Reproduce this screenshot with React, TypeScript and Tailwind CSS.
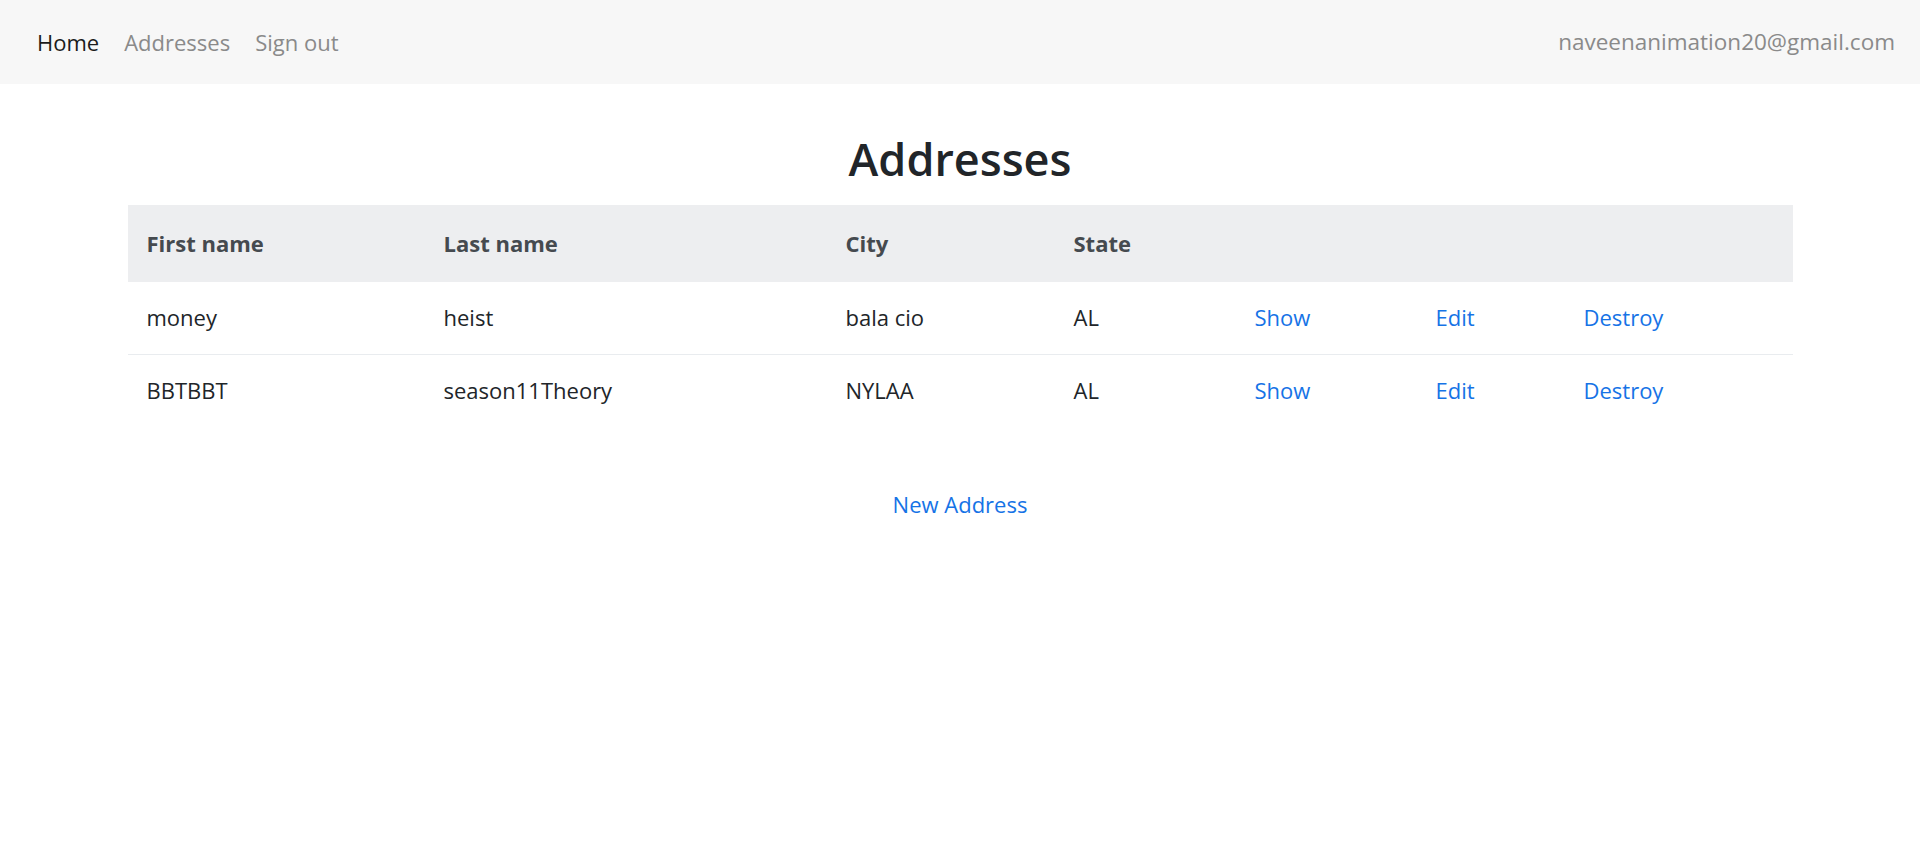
import React from "react";

const rows = [
  { first: "money", last: "heist", city: "bala cio", state: "AL" },
  { first: "BBTBBT", last: "season11Theory", city: "NYLAA", state: "AL" },
];

const cols = ["w-[297px]", "w-[402px]", "w-[228px]", "w-[181px]", "w-[181px]", "w-[148px]", "w-[228px]"];

export default function App() {
  return (
    <div className="min-h-[861px] bg-white text-[22px] text-[#212529]" style={{ fontFamily: '"Segoe UI", "Open Sans", sans-serif' }}>
      <nav className="flex h-[84px] items-center justify-between bg-[#f7f7f7] pl-[37px] pr-[25px]">
        <div className="flex items-center gap-[25px] text-[22px]">
          <a className="text-[#1c1c1c]">Home</a>
          <a className="text-[#8a8a8a]">Addresses</a>
          <a className="text-[#8a8a8a]">Sign out</a>
        </div>
        <div className="text-[22.5px] text-[#8a8a8a]">naveenanimation20@gmail.com</div>
      </nav>
      <main className="mx-auto w-[1665px]">
        <h1 className="mt-[48px] mb-[19px] text-center text-[45px] font-semibold leading-[54px] text-[#212529]">Addresses</h1>
        <table className="w-full border-collapse">
          <thead>
            <tr className="h-[77px] bg-[#edeef0] text-left text-[22px] font-bold text-[#454a4f]">
              <th className={`${cols[0]} px-[19px]`}>First name</th>
              <th className={`${cols[1]} px-[19px]`}>Last name</th>
              <th className={`${cols[2]} px-[19px]`}>City</th>
              <th className={`${cols[3]} px-[19px]`}>State</th>
              <th className={`${cols[4]} px-[19px]`}></th>
              <th className={`${cols[5]} px-[19px]`}></th>
              <th className={`${cols[6]} px-[19px]`}></th>
            </tr>
          </thead>
          <tbody>
            {rows.map((r, i) => (
              <tr key={i} className={`h-[72px] ${i === 0 ? "border-b border-[#e9ecef]" : ""}`}>
                <td className="px-[19px]">{r.first}</td>
                <td className="px-[19px]">{r.last}</td>
                <td className="px-[19px]">{r.city}</td>
                <td className="px-[19px]">{r.state}</td>
                <td className="px-[19px] text-[#1673e6]">Show</td>
                <td className="px-[19px] text-[#1673e6]">Edit</td>
                <td className="px-[19px] text-[#1673e6]">Destroy</td>
              </tr>
            ))}
          </tbody>
        </table>
        <div className="mt-[62px] text-center">
          <a className="text-[#1673e6]">New Address</a>
        </div>
      </main>
    </div>
  );
}
